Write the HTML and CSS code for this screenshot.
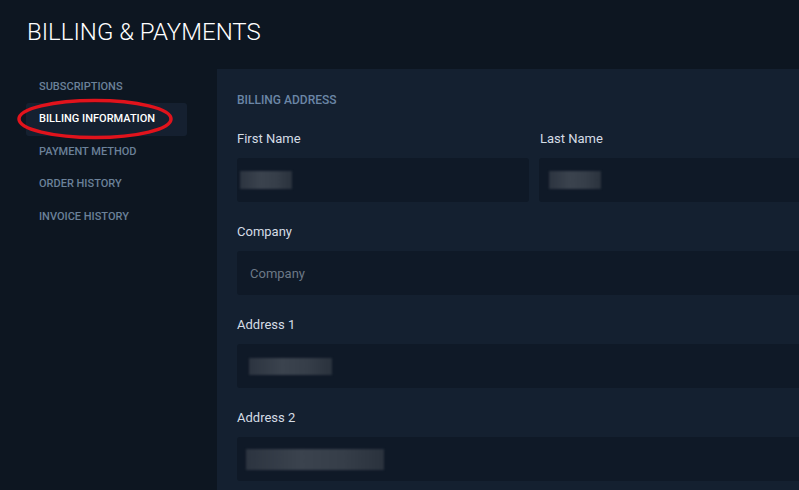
FILE: index.html
```html
<!DOCTYPE html>
<html>
<head>
<meta charset="utf-8">
<link rel="stylesheet" href="styles.css">
</head>
<body>
<div class="page">
  <h1 class="title">BILLING &amp; PAYMENTS</h1>
  <div class="layout">
    <nav class="sidebar">
      <a class="nav-item">SUBSCRIPTIONS</a>
      <a class="nav-item active">BILLING INFORMATION</a>
      <a class="nav-item">PAYMENT METHOD</a>
      <a class="nav-item">ORDER HISTORY</a>
      <a class="nav-item">INVOICE HISTORY</a>
      <svg class="annotation" width="170" height="46" viewBox="0 0 170 46">
        <ellipse cx="78" cy="23" rx="76" ry="18.5" fill="none" stroke="#e1131c" stroke-width="3.5"/>
      </svg>
    </nav>
    <main class="panel">
      <h2 class="section-title">BILLING ADDRESS</h2>
      <div class="row two">
        <div class="field">
          <label class="label">First Name</label>
          <div class="input"><span class="blur w52"></span></div>
        </div>
        <div class="field">
          <label class="label">Last Name</label>
          <div class="input"><span class="blur w52 off"></span></div>
        </div>
      </div>
      <div class="field">
        <label class="label">Company</label>
        <div class="input"><span class="placeholder">Company</span></div>
      </div>
      <div class="field">
        <label class="label">Address 1</label>
        <div class="input"><span class="blur w83"></span></div>
      </div>
      <div class="field">
        <label class="label">Address 2</label>
        <div class="input"><span class="blur w138 tall"></span></div>
      </div>
    </main>
  </div>
</div>
</body>
</html>
```

FILE: styles.css
```css
html, body {
  margin: 0;
  padding: 0;
  background: #0d1621;
  overflow: hidden;
  width: 799px;
  height: 490px;
}
body {
  font-family: Roboto, "Liberation Sans", sans-serif;
  color: #d6dde5;
}
.page {
  padding-left: 26px;
}
.title {
  margin: 0;
  height: 69px;
  line-height: 64px;
  font-size: 24px;
  font-weight: 300;
  color: #ffffff;
  padding-left: 1px;
}
.layout {
  display: flex;
  gap: 30px;
  align-items: flex-start;
}
.sidebar {
  position: relative;
  width: 161px;
  flex: none;
  display: flex;
  flex-direction: column;
  padding-top: 1.5px;
}
.nav-item {
  display: block;
  height: 32.5px;
  line-height: 32.5px;
  padding-left: 13px;
  font-size: 11px;
  font-weight: 500;
  color: #6b8199;
  border-radius: 3px;
}
.nav-item.active {
  background: #152030;
  color: #ffffff;
}
.annotation {
  position: absolute;
  left: -9px;
  top: 27px;
}
.panel {
  flex: none;
  width: 630px;
  min-height: 430px;
  background: #142030;
  padding: 23px 20px 20px;
}
.section-title {
  margin: 0 0 22px;
  font-size: 12px;
  line-height: 16px;
  font-weight: 500;
  color: #6b86a6;
}
.row.two {
  display: grid;
  grid-template-columns: 292px 292px;
  gap: 10px;
}
.field {
  margin-bottom: 21px;
}
.label {
  display: block;
  font-size: 13px;
  line-height: 18px;
  font-weight: 400;
  color: #d4dce5;
  margin-bottom: 10px;
}
.row .field:last-child .label {
  padding-left: 1px;
}
.input {
  height: 44px;
  background: #0f1927;
  border-radius: 3px;
  display: flex;
  align-items: center;
  padding-left: 13px;
  box-sizing: border-box;
}
.placeholder {
  font-size: 13px;
  color: #6c7886;
}
.blur {
  display: block;
  height: 18px;
  background: linear-gradient(90deg, #2c3440, #3b434e 40%, #363e49 70%, #2a323d);
  filter: blur(1px);
  margin-left: -10px;
}
.blur.w52 { width: 52px; }
.blur.off { margin-left: -3px; }
.blur.w83 { width: 83px; margin-left: -1px; height: 17px; }
.blur.w138 { width: 138px; margin-left: -4px; height: 21px; }
```
